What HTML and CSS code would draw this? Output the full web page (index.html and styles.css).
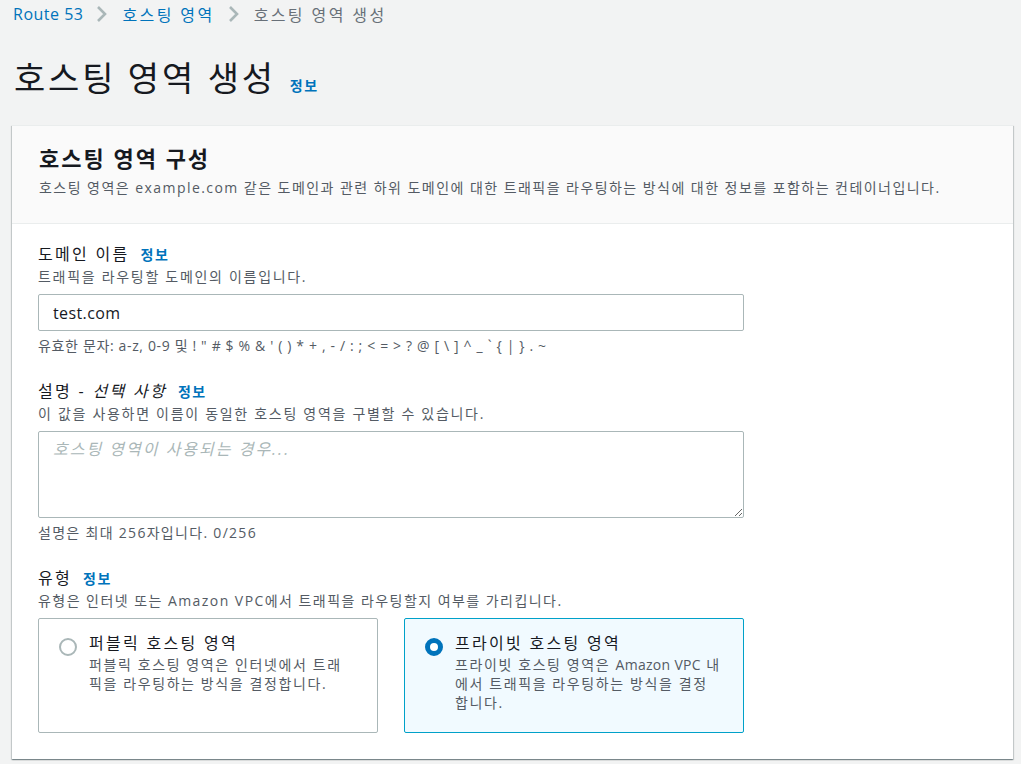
FILE: index.html
```html
<!DOCTYPE html>
<html lang="ko">
<head>
<meta charset="utf-8">
<link rel="stylesheet" href="styles.css">
</head>
<body>
<nav class="crumbs">
  <a class="crumb-link crumb-en">Route 53</a>
  <svg class="chev" width="12" height="20" viewBox="0 0 12 20"><path d="M2 3l7 7-7 7" fill="none" stroke="#aab7b8" stroke-width="2.6"/></svg>
  <a class="crumb-link crumb-ko">호스팅 영역</a>
  <svg class="chev" width="12" height="20" viewBox="0 0 12 20"><path d="M2 3l7 7-7 7" fill="none" stroke="#aab7b8" stroke-width="2.6"/></svg>
  <span class="crumb-cur crumb-ko">호스팅 영역 생성</span>
</nav>
<h1 class="page-title"><span class="title-text">호스팅 영역 생성</span><a class="info info-title">정보</a></h1>

<section class="card">
  <header class="card-head">
    <h2 class="card-title">호스팅 영역 구성</h2>
    <p class="card-desc">호스팅 영역은 example.com 같은 도메인과 관련 하위 도메인에 대한 트래픽을 라우팅하는 방식에 대한 정보를 포함하는 컨테이너입니다.</p>
  </header>
  <div class="card-body">
    <div class="field">
      <div class="label"><span class="label-text">도메인 이름</span><a class="info">정보</a></div>
      <div class="desc">트래픽을 라우팅할 도메인의 이름입니다.</div>
      <input class="input" type="text" value="test.com">
      <div class="hint hint-chars">유효한 문자: a-z, 0-9 및 ! " # $ % &amp; ' ( ) * + , - / : ; &lt; = &gt; ? @ [ \ ] ^ _ ` { | } . ~</div>
    </div>
    <div class="field">
      <div class="label"><span class="label-text">설명 - <i>선택 사항</i></span><a class="info">정보</a></div>
      <div class="desc">이 값을 사용하면 이름이 동일한 호스팅 영역을 구별할 수 있습니다.</div>
      <textarea class="textarea" placeholder="호스팅 영역이 사용되는 경우..."></textarea>
      <div class="hint">설명은 최대 256자입니다. 0/256</div>
    </div>
    <div class="field">
      <div class="label"><span class="label-text">유형</span><a class="info">정보</a></div>
      <div class="desc desc-mixed">유형은 인터넷 또는 Amazon VPC에서 트래픽을 라우팅할지 여부를 가리킵니다.</div>
      <div class="tiles">
        <div class="tile">
          <span class="radio"></span>
          <div class="tile-text">
            <div class="tile-title">퍼블릭 호스팅 영역</div>
            <div class="tile-desc">퍼블릭 호스팅 영역은 인터넷에서 트래픽을 라우팅하는 방식을 결정합니다.</div>
          </div>
        </div>
        <div class="tile tile-on">
          <span class="radio radio-on"></span>
          <div class="tile-text">
            <div class="tile-title">프라이빗 호스팅 영역</div>
            <div class="tile-desc">프라이빗 호스팅 영역은 <span class="en">Amazon VPC</span> 내에서 트래픽을 라우팅하는 방식을 결정합니다.</div>
          </div>
        </div>
      </div>
    </div>
  </div>
</section>
</body>
</html>
```

FILE: styles.css
```css
* { box-sizing: border-box; }
html, body { margin: 0; }
body {
  background: #f2f3f3;
  font-family: "Open Sans", "Noto Sans CJK KR", sans-serif;
  color: #16191f;
  padding: 0 8px 0 12px;
  height: 764px;
  overflow: hidden;
}
.crumbs {
  display: flex;
  align-items: center;
  height: 28px;
  font-size: 16px;
  padding-left: 1px;
}
.crumb-link { color: #0073bb; }
.crumb-cur { color: #687078; }
.crumb-en { letter-spacing: 0.5px; }
.crumb-ko { letter-spacing: 2.4px; }
.chev { margin: 0 14px 0 13px; }
.page-title {
  margin: 28px 0 0 2px;
  font-size: 34px;
  font-weight: 400;
  line-height: 44px;
  height: 69px;
}
.title-text { letter-spacing: 2.8px; }
.info {
  color: #0073bb;
  font-size: 14px;
  font-weight: 700;
  letter-spacing: 1.5px;
}
.info-title { margin-left: 14px; }
.card {
  width: 1001px;
  background: #fff;
  box-shadow: 0 1px 1px 0 rgba(0,28,36,.3), 1px 1px 1px 0 rgba(0,28,36,.15), -1px 1px 1px 0 rgba(0,28,36,.15);
  border-top: 1px solid #eaeded;
}
.card-head {
  background: #fafafa;
  border-bottom: 1px solid #eaeded;
  padding: 17px 26px 25px 27px;
}
.card-title {
  margin: 0;
  font-size: 22px;
  font-weight: 700;
  line-height: 30px;
  letter-spacing: 2px;
}
.card-desc {
  margin: 5px 0 0;
  font-size: 14px;
  line-height: 20px;
  color: #545b64;
  letter-spacing: 1.45px;
}
.card-body { padding: 18px 26px 26px 26px; }
.field { width: 706px; margin-bottom: 23px; }
.field:last-child { margin-bottom: 0; }
.label { font-size: 16px; line-height: 24px; }
.label-text { letter-spacing: 2.3px; }
.label .info { margin-left: 11px; }
.desc {
  font-size: 14px;
  line-height: 20px;
  color: #545b64;
  margin-bottom: 7px;
  letter-spacing: 1.7px;
}
.desc-mixed { letter-spacing: 1.45px; }
.input {
  display: block;
  width: 706px;
  height: 37px;
  border: 1px solid #aab7b8;
  border-radius: 2px;
  padding: 0 14px;
  font: 16px "Open Sans", "Noto Sans CJK KR", sans-serif;
  letter-spacing: 0.4px;
  color: #16191f;
  background: #fff;
}
.textarea {
  display: block;
  width: 706px;
  height: 87px;
  border: 1px solid #aab7b8;
  border-radius: 2px;
  padding: 4px 14px;
  font: 16px "Open Sans", "Noto Sans CJK KR", sans-serif;
  resize: vertical;
}
.textarea::placeholder { color: #aab7b8; font-style: italic; letter-spacing: 2px; }
.hint {
  font-size: 14px;
  line-height: 20px;
  color: #545b64;
  margin-top: 5px;
  letter-spacing: 1.3px;
}
.hint-chars { letter-spacing: 0.65px; }
.tiles { display: flex; gap: 26px; }
.tile {
  width: 340px;
  height: 115px;
  border: 1px solid #aab7b8;
  border-radius: 2px;
  background: #fff;
  display: flex;
  padding: 12px 21px 10px 20px;
}
.tile-on { border-color: #00a1c9; background: #f1faff; }
.radio {
  flex: none;
  width: 18px;
  height: 18px;
  border-radius: 50%;
  border: 2px solid #aab7b8;
  margin: 7px 12px 0 0;
  background: #fff;
}
.radio-on {
  border: 5px solid #0073bb;
  background: #fff;
}
.tile-title { font-size: 16px; line-height: 24px; letter-spacing: 2.3px; }
.tile-desc {
  font-size: 14px;
  line-height: 19px;
  color: #545b64;
  letter-spacing: 1.6px;
}
.tile-desc .en { display: inline-block; letter-spacing: 0.3px; }
```
